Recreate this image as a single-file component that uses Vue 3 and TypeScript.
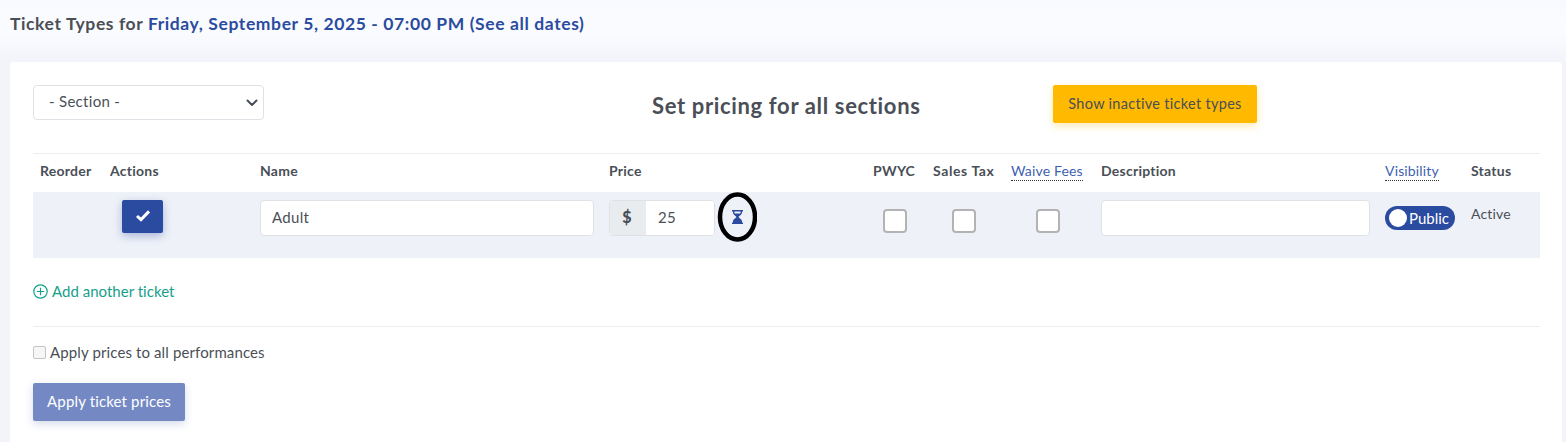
<script setup lang="ts">
import { ref } from "vue"

const ticketName = ref("Adult")
const price = ref("25")
const section = ref("")
</script>

<template>
  <div class="page">
    <h2 class="page-title">
      Ticket Types for
      <a class="date">Friday, September 5, 2025 - 07:00 PM (See all dates)</a>
    </h2>

    <section class="card">
      <div class="toolbar">
        <div class="select-wrap">
          <select v-model="section" class="section-select">
            <option value="">- Section -</option>
          </select>
          <svg class="chevron" width="12" height="8" viewBox="0 0 12 8">
            <path d="M1.5 1.5 6 6l4.5-4.5" fill="none" stroke="#4a4f57" stroke-width="2" stroke-linecap="round" stroke-linejoin="round" />
          </svg>
        </div>
        <h3 class="set-pricing">Set pricing for all sections</h3>
        <button class="btn-yellow">Show inactive ticket types</button>
      </div>

      <div class="grid head">
        <div>Reorder</div>
        <div>Actions</div>
        <div>Name</div>
        <div>Price</div>
        <div>PWYC</div>
        <div class="sales-tax">Sales Tax</div>
        <div><span class="hint">Waive Fees</span></div>
        <div>Description</div>
        <div><span class="hint">Visibility</span></div>
        <div>Status</div>
      </div>

      <div class="grid row">
        <div></div>
        <div class="action-cell">
          <button class="btn-check">
            <svg width="16" height="13" viewBox="0 0 16 13">
              <path d="M2 7l4 3.6L14 2.4" fill="none" stroke="#fff" stroke-width="3" />
            </svg>
          </button>
        </div>
        <div class="field-cell">
          <input v-model="ticketName" class="text-input" />
        </div>
        <div class="price-cell">
          <div class="price-group">
            <span class="addon">$</span>
            <input v-model="price" class="price-input" />
          </div>
          <svg class="hourglass" width="40" height="50" viewBox="0 0 40 50">
            <ellipse cx="20.500" cy="25" rx="17.500" ry="22.500" fill="none" stroke="#000" stroke-width="4.500" />
            <path fill-rule="evenodd" d="M15 18h11v1.500h-1v1.300c0 2-3.300 3.200-3.300 4.200s3.300 2.200 3.300 4.200v1.300h1V32H15v-1.500h1v-1.300c0-2 3.300-3.200 3.300-4.200s-3.300-2.200-3.300-4.200v-1.300h-1zM17.400 19.600v1.200l.3.700h5.600l.3-.7v-1.200z" fill="#2b4ba0" />
          </svg>
        </div>
        <div class="check-cell pwyc"><span class="box"></span></div>
        <div class="check-cell tax"><span class="box"></span></div>
        <div class="check-cell waive"><span class="box"></span></div>
        <div class="field-cell">
          <input class="text-input desc" />
        </div>
        <div class="toggle-cell">
          <div class="toggle">
            <span class="knob"></span>
            <span>Public</span>
          </div>
        </div>
        <div class="status">Active</div>
      </div>

      <a class="add-ticket">
        <svg width="15" height="15" viewBox="0 0 15 15">
          <circle cx="7.500" cy="7.500" r="6.700" fill="none" stroke="#16a08c" stroke-width="1.200" />
          <path d="M7.500 3.800v7.400M3.800 7.500h7.400" stroke="#16a08c" stroke-width="1.200" />
        </svg>
        Add another ticket
      </a>

      <hr class="divider" />

      <label class="apply-all">
        <span class="small-box"></span>
        Apply prices to all performances
      </label>

      <button class="btn-apply">Apply ticket prices</button>
    </section>
  </div>
</template>

<style>
html,
body {
  margin: 0;
  background: #f3f4fa;
}
</style>

<style scoped>
.page {
  height: 442px;
  overflow: hidden;
  box-sizing: border-box;
  padding: 14px 4px 0 10px;
  font-family: Lato, "Open Sans", sans-serif;
  color: #4a4f57;
  background: linear-gradient(#f8f9fe 0, #fbfcff 30px, #f3f4fa 62px);
}

.page-title {
  margin: 0 0 28px;
  height: 20px;
  font-size: 17.500px;
  line-height: 20px;
  font-weight: 700;
  letter-spacing: 0.6px;
  white-space: nowrap;
}

.date {
  color: #2b4ba0;
}

.card {
  box-sizing: border-box;
  height: 400px;
  padding: 23px 22px 0 23px;
  background: #fff;
  border-radius: 4px;
}

.toolbar {
  display: grid;
  grid-template-columns: 619px 401px 204px;
  height: 68px;
  align-items: start;
}

.select-wrap {
  position: relative;
  width: 231px;
}

.section-select {
  display: block;
  box-sizing: border-box;
  width: 100%;
  height: 35px;
  padding: 0 15px 4px;
  appearance: none;
  background: #fff;
  border: 1px solid #dfe1e6;
  border-radius: 4px;
  font: 15px Lato, sans-serif;
  letter-spacing: 0.3px;
  color: #4a4f57;
}

.chevron {
  position: absolute;
  right: 6px;
  top: 14px;
}

.set-pricing {
  margin: 8px 0 0;
  font-size: 22px;
  line-height: 26px;
  font-weight: 700;
  letter-spacing: 0.65px;
  white-space: nowrap;
}

.btn-yellow {
  height: 38px;
  padding: 0 0 2px;
  border: none;
  border-radius: 2px;
  background: #ffba00;
  color: #4a4f57;
  font: 14.500px Lato, sans-serif;
  letter-spacing: 0.3px;
  box-shadow: 0 3px 8px rgba(255, 186, 0, 0.3);
}

.grid {
  display: grid;
  grid-template-columns: 70px 150px 349px 264px 60px 78px 90px 284px 86px 69px;
  padding-left: 7px;
}

.head {
  height: 39px;
  box-sizing: border-box;
  padding-bottom: 5px;
  border-top: 1px solid #ebedf0;
  align-items: center;
  font-size: 14px;
  font-weight: 700;
  letter-spacing: 0.25px;
  white-space: nowrap;
}

.sales-tax {
  letter-spacing: 0.6px;
}

.hint {
  color: #3f5fb0;
  font-weight: 400;
  letter-spacing: 0.15px;
  border-bottom: 1px dotted #333;
  padding-bottom: 1px;
}

.row {
  height: 66px;
  background: #eef1f8;
  padding-top: 8px;
  box-sizing: border-box;
}

.action-cell {
  padding-left: 12px;
}

.btn-check {
  display: flex;
  align-items: center;
  justify-content: center;
  width: 41px;
  height: 33px;
  padding: 0 0 2px;
  border: none;
  border-radius: 2px;
  background: #2b4ba0;
  box-shadow: 0 3px 8px rgba(43, 75, 160, 0.35);
}

.text-input {
  display: block;
  box-sizing: border-box;
  width: 334px;
  height: 36px;
  padding: 0 11px 2px;
  border: 1px solid #dfe1e6;
  border-radius: 4px;
  background: #fff;
  font: 15px Lato, sans-serif;
  letter-spacing: 0.3px;
  color: #4a4f57;
  outline: none;
}

.text-input.desc {
  width: 269px;
}

.price-cell {
  display: flex;
  align-items: flex-start;
}

.price-group {
  display: flex;
  width: 106px;
  height: 36px;
  box-sizing: border-box;
  border: 1px solid #dfe1e6;
  border-radius: 4px;
  overflow: hidden;
  background: #fff;
}

.addon {
  width: 36px;
  display: flex;
  align-items: center;
  justify-content: center;
  padding: 0 2px 3px 0;
  box-sizing: border-box;
  background: #e9ecef;
  font-size: 16px;
  font-weight: 900;
}

.price-input {
  flex: 1;
  min-width: 0;
  box-sizing: border-box;
  padding: 0 0 2px 12px;
  border: none;
  font: 15px Lato, sans-serif;
  letter-spacing: 0.3px;
  color: #4a4f57;
  outline: none;
}

.hourglass {
  margin: -8px 0 0 2px;
}

.check-cell {
  padding-top: 9px;
}

.pwyc {
  padding-left: 10px;
}

.tax {
  padding-left: 19px;
}

.waive {
  padding-left: 25px;
}

.box {
  display: block;
  box-sizing: border-box;
  width: 24px;
  height: 24px;
  border: 2px solid #b3b3b3;
  border-radius: 4px;
  background: #fff;
}

.toggle-cell {
  padding-top: 6px;
}

.toggle {
  display: flex;
  align-items: center;
  gap: 2px;
  box-sizing: border-box;
  width: 70px;
  height: 24px;
  padding-left: 4px;
  border-radius: 12px;
  background: #2b4ba0;
  color: #fff;
  font-size: 15px;
}

.knob {
  flex: none;
  width: 18px;
  height: 18px;
  border-radius: 50%;
  background: #fff;
}

.status {
  padding-top: 4px;
  font-size: 14px;
  line-height: 20px;
  letter-spacing: 0.15px;
}

.add-ticket {
  display: flex;
  align-items: center;
  gap: 4px;
  margin-top: 23px;
  height: 20px;
  color: #16a08c;
  font-size: 15px;
  letter-spacing: 0.02px;
}

.divider {
  margin: 25px 0 0;
  border: none;
  border-top: 1px solid #ebedf0;
}

.apply-all {
  display: flex;
  align-items: center;
  gap: 4px;
  margin-top: 15px;
  height: 20px;
  font-size: 15px;
  letter-spacing: 0.12px;
}

.small-box {
  box-sizing: border-box;
  width: 13px;
  height: 13px;
  border: 1px solid #c4c4c4;
  border-radius: 2px;
  background: #f6f6f6;
}

.btn-apply {
  display: block;
  width: 152px;
  height: 38px;
  margin-top: 21px;
  padding: 0 0 2px;
  border: none;
  border-radius: 2px;
  background: #7489c4;
  color: #fff;
  font: 15px Lato, sans-serif;
  letter-spacing: 0.15px;
  box-shadow: 0 3px 8px rgba(43, 75, 160, 0.2);
}
</style>
